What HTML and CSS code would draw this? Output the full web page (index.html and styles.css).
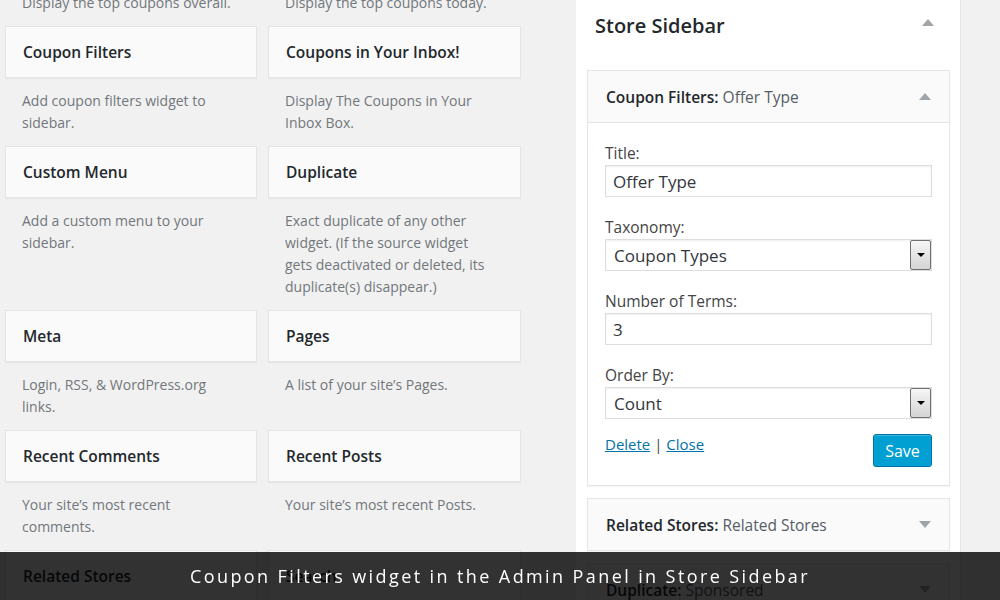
FILE: index.html
```html
<!DOCTYPE html>
<html lang="en">
<head>
    <meta charset="UTF-8">
    <meta name="viewport" content="width=device-width, initial-scale=1.0">
    <title>Widgets</title>
    <link rel="stylesheet" href="styles.css">
</head>
<body>

<div class="page">
    <div class="widgets">
        <div class="widget">
            <div class="widget-desc">Display the top coupons overall.</div>
        </div>
        <div class="widget">
            <div class="widget-desc">Display the top coupons today.</div>
        </div>

        <div class="widget">
            <div class="widget-top">Coupon Filters</div>
            <div class="widget-desc">Add coupon filters widget to sidebar.</div>
        </div>
        <div class="widget">
            <div class="widget-top">Coupons in Your Inbox!</div>
            <div class="widget-desc">Display The Coupons in Your Inbox Box.</div>
        </div>

        <div class="widget">
            <div class="widget-top">Custom Menu</div>
            <div class="widget-desc">Add a custom menu to your sidebar.</div>
        </div>
        <div class="widget">
            <div class="widget-top">Duplicate</div>
            <div class="widget-desc">Exact duplicate of any other widget. (If the source widget gets deactivated or deleted, its duplicate(s) disappear.)</div>
        </div>

        <div class="widget">
            <div class="widget-top">Meta</div>
            <div class="widget-desc">Login, RSS, &amp; WordPress.org links.</div>
        </div>
        <div class="widget">
            <div class="widget-top">Pages</div>
            <div class="widget-desc">A list of your site’s Pages.</div>
        </div>

        <div class="widget">
            <div class="widget-top">Recent Comments</div>
            <div class="widget-desc">Your site’s most recent comments.</div>
        </div>
        <div class="widget">
            <div class="widget-top">Recent Posts</div>
            <div class="widget-desc">Your site’s most recent Posts.</div>
        </div>

        <div class="widget">
            <div class="widget-top">Related Stores</div>
        </div>
        <div class="widget">
            <div class="widget-top">Search</div>
        </div>
    </div>

    <div class="sidebar">
        <div class="sidebar-name">
            <h2>Store Sidebar</h2>
            <span class="arrow-up"></span>
        </div>

        <div class="box open">
            <div class="box-top">
                <span><b>Coupon Filters:</b> Offer Type</span>
                <span class="arrow-up small"></span>
            </div>
            <div class="box-inside">
                <div class="field">
                    <label>Title:</label>
                    <input type="text" class="text-input" value="Offer Type">
                </div>
                <div class="field">
                    <label>Taxonomy:</label>
                    <div class="select">
                        <span>Coupon Types</span>
                        <span class="select-btn"><i></i></span>
                    </div>
                </div>
                <div class="field">
                    <label>Number of Terms:</label>
                    <input type="text" class="text-input" value="3">
                </div>
                <div class="field">
                    <label>Order By:</label>
                    <div class="select">
                        <span>Count</span>
                        <span class="select-btn"><i></i></span>
                    </div>
                </div>
                <div class="actions">
                    <div class="links">
                        <a href="#">Delete</a> | <a href="#">Close</a>
                    </div>
                    <button class="save">Save</button>
                </div>
            </div>
        </div>

        <div class="box">
            <div class="box-top">
                <span><b>Related Stores:</b> Related Stores</span>
                <span class="arrow-down"></span>
            </div>
        </div>

        <div class="box">
            <div class="box-top">
                <span><b>Duplicate:</b> Sponsored</span>
                <span class="arrow-down"></span>
            </div>
        </div>
    </div>
</div>

<div class="caption">Coupon Filters widget in the Admin Panel in Store Sidebar</div>

</body>
</html>
```

FILE: styles.css
```css
body {
    margin: 0;
    background-color: #f1f1f1;
    font-family: "Open Sans", "Liberation Sans", sans-serif;
    color: #23282d;
    overflow: hidden;
}
.page {
    display: flex;
    align-items: flex-start;
    height: 600px;
    overflow: hidden;
}
.widgets {
    display: grid;
    grid-template-columns: 252px 253px;
    column-gap: 11px;
    margin: -20px 0 0 5px;
}
.widget {
    display: flex;
    flex-direction: column;
}
.widget-top {
    height: 50px;
    line-height: 50px;
    padding-left: 17px;
    background-color: #fafafa;
    border: 1px solid #e5e5e5;
    box-shadow: 0 1px 1px rgba(0, 0, 0, 0.04);
    font-size: 15.5px;
    font-weight: 600;
}
.widget-desc {
    padding: 12px 24px 12px 17px;
    line-height: 22px;
    font-size: 14px;
    color: #72777c;
}
.sidebar {
    margin-left: 55px;
    width: 363px;
    height: 600px;
    padding: 0 10px 0 11px;
    background-color: #ffffff;
    border-right: 1px solid #e5e5e5;
    box-sizing: content-box;
}
.sidebar-name {
    display: flex;
    justify-content: space-between;
    align-items: center;
    height: 50px;
    padding: 0 16px 0 8px;
    margin-bottom: 20px;
}
.sidebar-name h2 {
    margin: 0;
    font-size: 20px;
    font-weight: 600;
}
.arrow-up {
    width: 0;
    height: 0;
    border-left: 6px solid transparent;
    border-right: 6px solid transparent;
    border-bottom: 7px solid #a0a5aa;
    margin-top: -6px;
}
.arrow-up.small {
    margin-top: 0;
}
.arrow-down {
    width: 0;
    height: 0;
    border-left: 6px solid transparent;
    border-right: 6px solid transparent;
    border-top: 7px solid #a0a5aa;
}
.box {
    border: 1px solid #e5e5e5;
    box-shadow: 0 1px 1px rgba(0, 0, 0, 0.04);
    margin-bottom: 12px;
}
.box-top {
    display: flex;
    justify-content: space-between;
    align-items: center;
    height: 51px;
    padding: 0 18px 0 18px;
    background-color: #fafafa;
    font-size: 15.5px;
    color: #555d66;
}
.box-top b {
    font-weight: 600;
    color: #23282d;
}
.box.open .box-top {
    border-bottom: 1px solid #e5e5e5;
}
.box-inside {
    padding: 20px 17px 18px 17px;
    background-color: #ffffff;
}
.field {
    margin-bottom: 20px;
}
.field label {
    display: block;
    line-height: 20px;
    margin-bottom: 2px;
    font-size: 15.5px;
    color: #444;
}
.text-input {
    display: block;
    width: 100%;
    height: 32px;
    box-sizing: border-box;
    margin: 0;
    padding: 0 7px;
    border: 1px solid #dddddd;
    box-shadow: inset 0 1px 2px rgba(0, 0, 0, 0.07);
    font-family: "Open Sans", "Liberation Sans", sans-serif;
    font-size: 17px;
    color: #32373c;
    outline: none;
}
.select {
    display: flex;
    justify-content: space-between;
    align-items: center;
    height: 32px;
    box-sizing: border-box;
    padding: 0 0 0 8px;
    border: 1px solid #dddddd;
    box-shadow: inset 0 1px 2px rgba(0, 0, 0, 0.07);
    font-size: 17px;
    color: #32373c;
}
.select-btn {
    display: flex;
    justify-content: center;
    align-items: center;
    width: 19px;
    height: 28px;
    border: 1px solid #707070;
    border-radius: 2px;
    background: linear-gradient(#f6f6f6, #d4d4d4);
}
.select-btn i {
    width: 0;
    height: 0;
    border-left: 4px solid transparent;
    border-right: 4px solid transparent;
    border-top: 4px solid #000;
}
.actions {
    display: flex;
    justify-content: space-between;
    align-items: flex-start;
    margin-top: -5px;
}
.links {
    line-height: 20px;
    font-size: 15px;
    color: #444;
}
.links a {
    color: #0073aa;
}
.save {
    height: 33px;
    width: 59px;
    padding: 0;
    margin-top: 0;
    background-color: #00a0d2;
    border: 1px solid #0073aa;
    border-radius: 3px;
    box-shadow: inset 0 1px 0 rgba(120, 200, 230, 0.5);
    color: #ffffff;
    font-family: "Open Sans", "Liberation Sans", sans-serif;
    font-size: 16px;
}
.caption {
    position: fixed;
    left: 0;
    right: 0;
    bottom: 0;
    height: 48px;
    line-height: 48px;
    background-color: rgba(0, 0, 0, 0.8);
    color: #ffffff;
    text-align: center;
    font-size: 18px;
    letter-spacing: 2.4px;
}
```
